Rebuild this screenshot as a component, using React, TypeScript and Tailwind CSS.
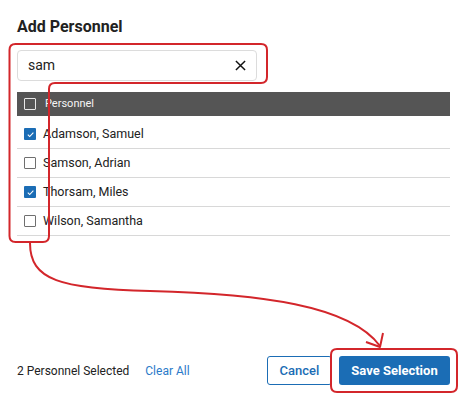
import React from "react";

interface Person {
  name: string;
  checked: boolean;
}

const people: Person[] = [
  { name: "Adamson, Samuel", checked: true },
  { name: "Samson, Adrian", checked: false },
  { name: "Thorsam, Miles", checked: true },
  { name: "Wilson, Samantha", checked: false },
];

// simple square checkbox, blue when ticked
const Box: React.FC<{ checked: boolean; dark?: boolean }> = ({ checked, dark }) => {
  if (checked) {
    return (
      <span className="w-[12px] h-[12px] rounded-[1px] bg-[#1b6db5] flex items-center justify-center shrink-0">
        <svg width="9" height="9" viewBox="0 0 10 10" fill="none">
          <path d="M2 5.2 L4.1 7.3 L8.2 2.8" stroke="#fff" strokeWidth="1.2" />
        </svg>
      </span>
    );
  }
  return (
    <span
      className={`w-[12px] h-[12px] rounded-[1px] border shrink-0 ${
        dark ? "border-[#e8e8e8] bg-[#555555]" : "border-[#6f6f6f] bg-white"
      }`}
    />
  );
};

export default function App() {
  return (
    <div className="relative w-[469px] h-[395px] bg-white font-['Roboto',sans-serif] px-[17px] pt-[15px] flex flex-col text-[#1f1f1f]">
      <h1 className="text-[16px] font-bold leading-[24px] text-[#222]">Add Personnel</h1>

      <div className="mt-[11px] h-[31px] w-[240px] border border-[#dcdcdc] rounded-[4px] flex items-center justify-between pl-[10px] pr-[10px]">
        <span className="text-[14px] text-[#222]">sam</span>
        <svg width="11" height="11" viewBox="0 0 12 12">
          <path d="M1 1 L11 11 M11 1 L1 11" stroke="#111" strokeWidth="1.6" />
        </svg>
      </div>

      <div className="mt-[11px] w-[433px]">
        <div className="h-[24px] bg-[#555555] flex items-center pl-[7px] gap-[9px]">
          <Box checked={false} dark />
          <span className="text-[11px] text-[#f4f4f4]">Personnel</span>
        </div>
        <div className="pt-[4px]">
          {people.map((p) => (
            <div key={p.name} className="h-[29px] border-b border-[#d8d8d8] flex items-center pl-[7px] gap-[7px]">
              <Box checked={p.checked} />
              <span className="text-[12.5px] text-[#222]">{p.name}</span>
            </div>
          ))}
        </div>
      </div>

      <div className="mt-auto mb-[10px] mr-[2px] h-[29px] flex items-center justify-between">
        <div className="flex items-center gap-[16px] text-[12px]">
          <span className="text-[#222]">2 Personnel Selected</span>
          <span className="text-[#2b7bc9]">Clear All</span>
        </div>
        <div className="flex items-center gap-[7px]">
          <button className="h-[29px] w-[65px] border border-[#1b6db5] rounded-[3px] text-[13px] font-medium text-[#1b6db5] bg-white">
            Cancel
          </button>
          <button className="h-[29px] w-[111px] rounded-[3px] bg-[#1b6db5] text-[13px] font-bold text-white">
            Save Selection
          </button>
        </div>
      </div>

      {/* red call-out annotations drawn over the dialog */}
      <svg className="absolute inset-0 pointer-events-none" width="469" height="395" viewBox="0 0 469 395" fill="none">
        <path
          d="M15.5,44 H261 Q267,44 267,50 V77 Q267,83 261,83 H55 Q49,83 49,89 V236 Q49,242 43,242 H15.5 Q9.5,242 9.5,236 V50 Q9.5,44 15.5,44 Z"
          stroke="#d3262b"
          strokeWidth="2"
        />
        <path d="M30,243 C30,280 60,289 150,291 C260,294 350,305 380,346" stroke="#d3262b" strokeWidth="2" />
        <path d="M366,342 L380,347 L383,333" stroke="#d3262b" strokeWidth="2" strokeLinejoin="round" />
        <path
          d="M337,349 H451 Q457,349 457,355 V386 Q457,392 451,392 H337 Q331,392 331,386 V355 Q331,349 337,349 Z"
          stroke="#d3262b"
          strokeWidth="2"
        />
      </svg>
    </div>
  );
}
